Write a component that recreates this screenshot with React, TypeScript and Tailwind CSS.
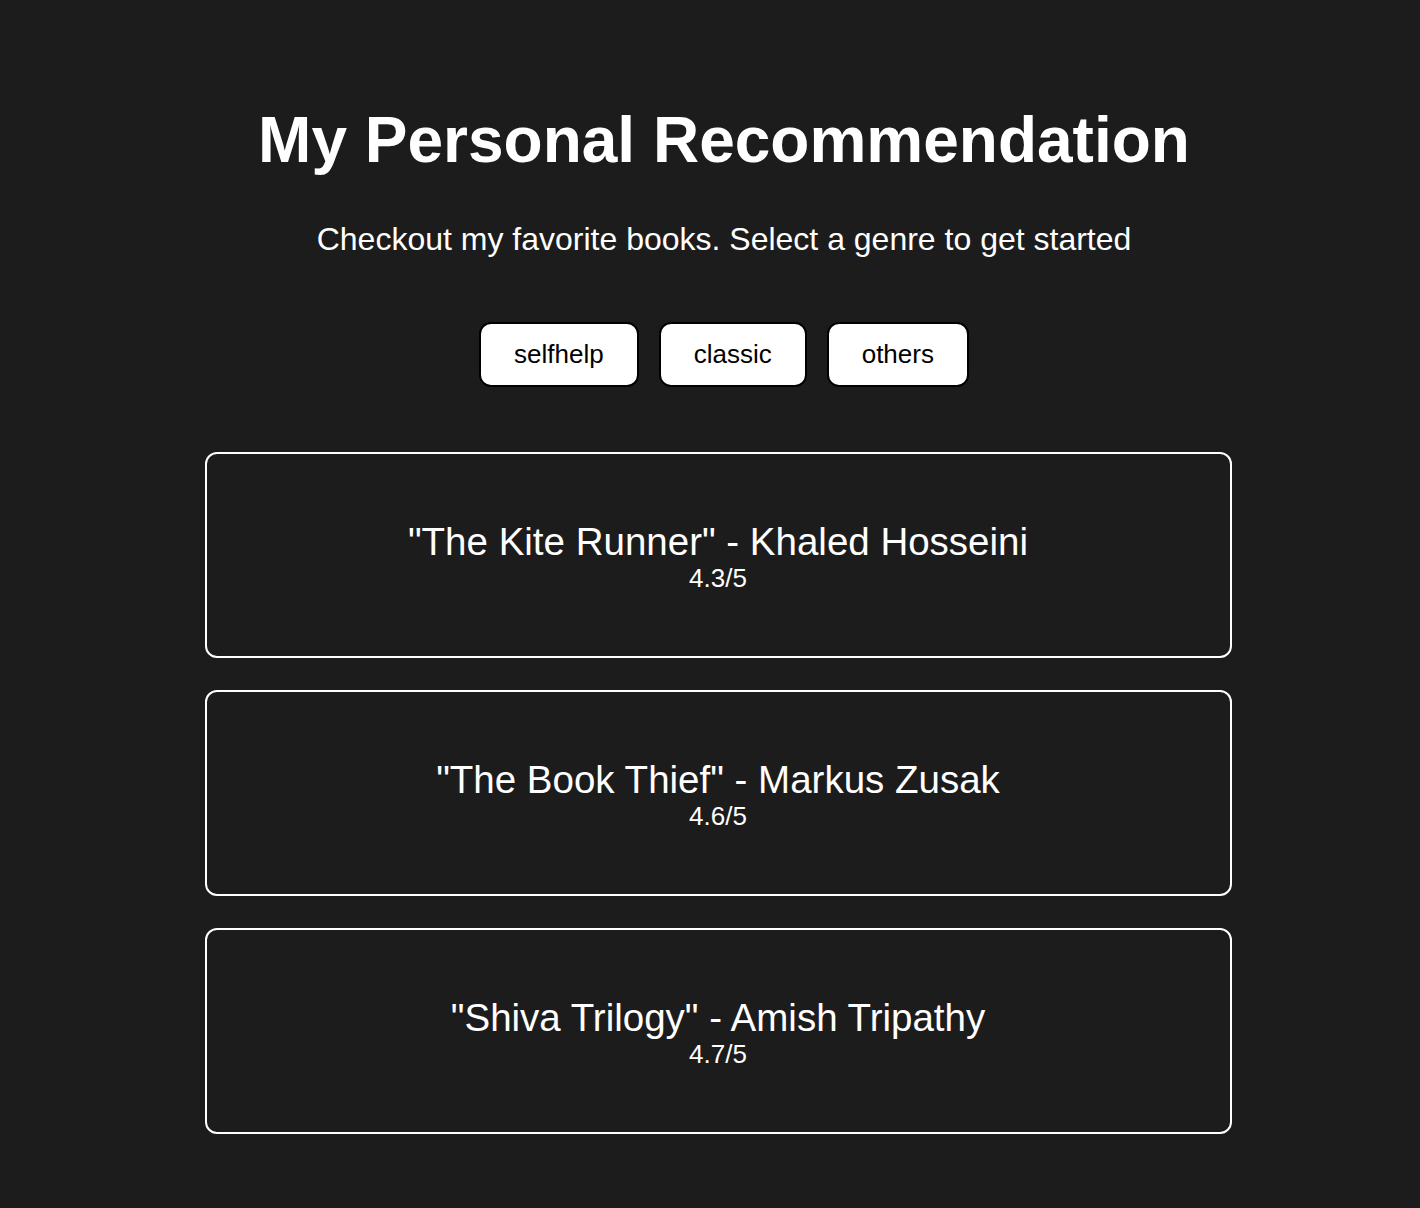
import React, { useState } from 'react';

type Book = { name: string; rating: string };

const books: Record<string, Book[]> = {
    selfhelp: [
        { name: '"Atomic Habits" - James Clear', rating: '4.8/5' },
    ],
    classic: [
        { name: '"The Kite Runner" - Khaled Hosseini', rating: '4.3/5' },
        { name: '"The Book Thief" - Markus Zusak', rating: '4.6/5' },
        { name: '"Shiva Trilogy" - Amish Tripathy', rating: '4.7/5' },
    ],
    others: [
        { name: '"The Kite Runner" - Khaled Hosseini', rating: '4.3/5' },
        { name: '"The Book Thief" - Markus Zusak', rating: '4.6/5' },
        { name: '"Shiva Trilogy" - Amish Tripathy', rating: '4.7/5' },
    ],
};

export default function App() {
    const [genre, setGenre] = useState('others');

    return (
        <div
            className="min-h-[1208px] bg-[#1c1c1c] text-white pt-[100px]"
            style={{ fontFamily: '"Liberation Sans", Arial, sans-serif' }}
        >
            {/* cabecera */}
            <div className="flex flex-col items-center pl-[28px]">
                <h1 className="text-[64px] font-bold leading-[80px]">My Personal Recommendation</h1>
                <p className="mt-[39px] text-[32px] leading-[40px]">
                    Checkout my favorite books. Select a genre to get started
                </p>
                <div className="mt-[63px] flex gap-[20px]">
                    {Object.keys(books).map((g) => (
                        <button
                            key={g}
                            onClick={() => setGenre(g)}
                            className="h-[65px] px-[33px] rounded-[12px] border-2 border-black bg-white text-black text-[26px]"
                        >
                            {g}
                        </button>
                    ))}
                </div>
            </div>

            {/* lista de libros */}
            <div className="mt-[65px] flex flex-col items-center gap-[32px] pl-[16px]">
                {books[genre].map((book) => (
                    <div
                        key={book.name}
                        className="w-[1027px] h-[206px] pt-[6px] rounded-[12px] border-2 border-white flex flex-col items-center justify-center"
                    >
                        <div className="text-[38.5px] leading-[40px]">{book.name}</div>
                        <div className="text-[26px] leading-[32px]">{book.rating}</div>
                    </div>
                ))}
            </div>
        </div>
    );
}
